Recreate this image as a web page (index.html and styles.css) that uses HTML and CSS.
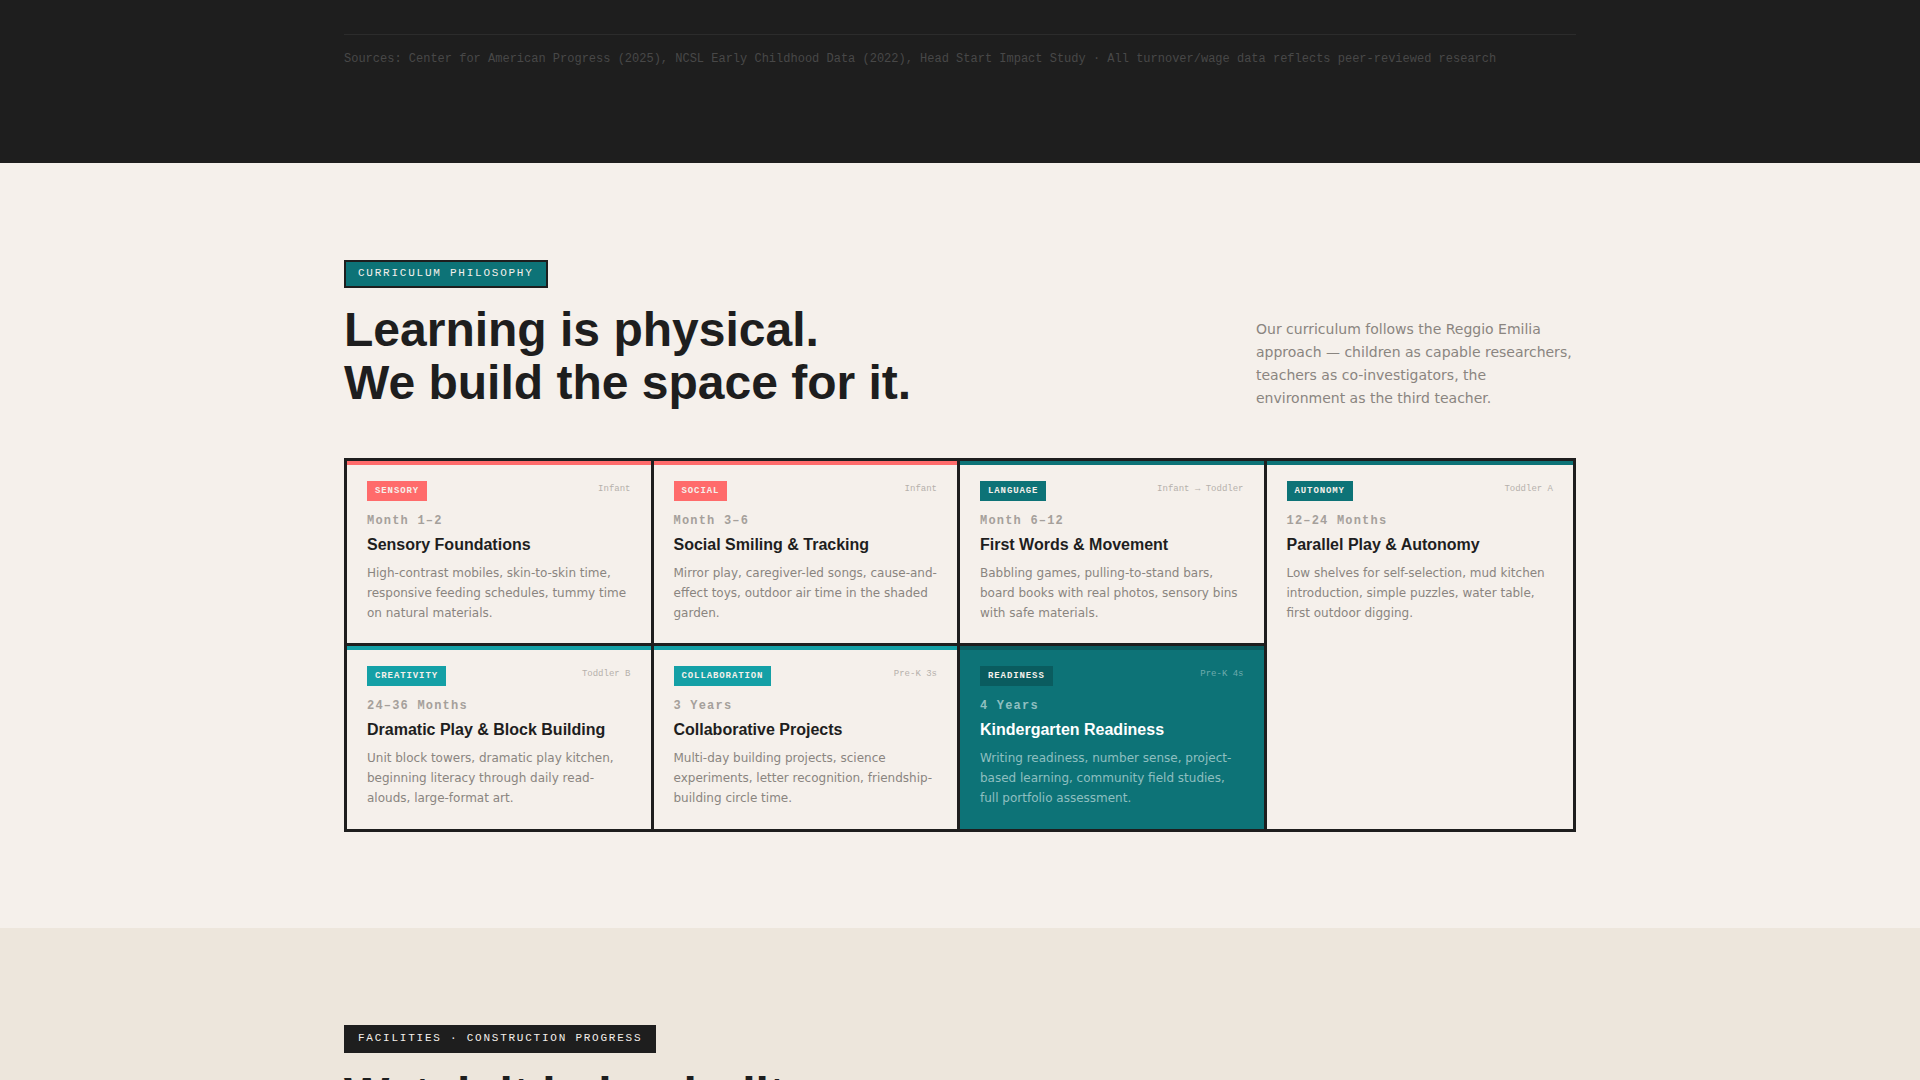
FILE: index.html
```
<!DOCTYPE html>
<html lang="en">

<head>
    <meta charset="UTF-8">
    <meta name="viewport" content="width=device-width, initial-scale=1.0">

    <title>Curriculum Philosophy</title>
    <link rel="stylesheet" href="styles.css">
</head>

<body>
    <section class="research">
        <div class="container">
            <p class="sources">Sources: Center for American Progress (2025), NCSL Early Childhood Data (2022), Head Start Impact Study · All turnover/wage data reflects peer-reviewed research</p>
        </div>
    </section>

    <section class="curriculum">
        <div class="container">
            <div class="section-head">
                <div>
                    <span class="label label-teal">CURRICULUM PHILOSOPHY</span>
                    <h2>Learning is physical.<br>We build the space for it.</h2>
                </div>
                <p class="intro">Our curriculum follows the Reggio Emilia approach — children as capable researchers, teachers as co-investigators, the environment as the third teacher.</p>
            </div>

            <div class="grid">
                <article class="cell coral">
                    <div class="cell-top">
                        <span class="tag">SENSORY</span>
                        <span class="room">Infant</span>
                    </div>
                    <div class="age">Month 1–2</div>
                    <h3>Sensory Foundations</h3>
                    <p>High-contrast mobiles, skin-to-skin time, responsive feeding schedules, tummy time on natural materials.</p>
                </article>

                <article class="cell coral">
                    <div class="cell-top">
                        <span class="tag">SOCIAL</span>
                        <span class="room">Infant</span>
                    </div>
                    <div class="age">Month 3–6</div>
                    <h3>Social Smiling &amp; Tracking</h3>
                    <p>Mirror play, caregiver-led songs, cause-and-effect toys, outdoor air time in the shaded garden.</p>
                </article>

                <article class="cell teal">
                    <div class="cell-top">
                        <span class="tag">LANGUAGE</span>
                        <span class="room">Infant → Toddler</span>
                    </div>
                    <div class="age">Month 6–12</div>
                    <h3>First Words &amp; Movement</h3>
                    <p>Babbling games, pulling-to-stand bars, board books with real photos, sensory bins with safe materials.</p>
                </article>

                <article class="cell teal tall">
                    <div class="cell-top">
                        <span class="tag">AUTONOMY</span>
                        <span class="room">Toddler A</span>
                    </div>
                    <div class="age">12–24 Months</div>
                    <h3>Parallel Play &amp; Autonomy</h3>
                    <p>Low shelves for self-selection, mud kitchen introduction, simple puzzles, water table, first outdoor digging.</p>
                </article>

                <article class="cell aqua last-row">
                    <div class="cell-top">
                        <span class="tag">CREATIVITY</span>
                        <span class="room">Toddler B</span>
                    </div>
                    <div class="age">24–36 Months</div>
                    <h3>Dramatic Play &amp; Block Building</h3>
                    <p>Unit block towers, dramatic play kitchen, beginning literacy through daily read-alouds, large-format art.</p>
                </article>

                <article class="cell aqua last-row">
                    <div class="cell-top">
                        <span class="tag">COLLABORATION</span>
                        <span class="room">Pre-K 3s</span>
                    </div>
                    <div class="age">3 Years</div>
                    <h3>Collaborative Projects</h3>
                    <p>Multi-day building projects, science experiments, letter recognition, friendship-building circle time.</p>
                </article>

                <article class="cell filled last-row">
                    <div class="cell-top">
                        <span class="tag">READINESS</span>
                        <span class="room">Pre-K 4s</span>
                    </div>
                    <div class="age">4 Years</div>
                    <h3>Kindergarten Readiness</h3>
                    <p>Writing readiness, number sense, project-based learning, community field studies, full portfolio assessment.</p>
                </article>
            </div>
        </div>
    </section>

    <section class="facilities">
        <div class="container">
            <span class="label">FACILITIES · CONSTRUCTION PROGRESS</span>
            <h2>Watch it being built.</h2>
        </div>
    </section>
</body>

</html>
```

FILE: styles.css
```
:root {
    --ink: #1e1e1e;
    --paper: #f5f0eb;
    --sand: #ede6dc;
    --teal: #0d7377;
    --teal-dark: #0a5c5f;
    --aqua: #14a0a6;
    --coral: #ff6b6b;
    --mono: "Liberation Mono", monospace;
    --head: "Liberation Sans", Arial, sans-serif;
}

* {
    box-sizing: border-box;
    margin: 0;
    padding: 0;
}

body {
    display: flex;
    flex-direction: column;
    height: 100vh;
    overflow: hidden;
    background: var(--paper);
    color: var(--ink);
    font-family: "DejaVu Sans", sans-serif;
}

section {
    flex-shrink: 0;
    padding: 96px 0;
}

.container {
    max-width: 1280px;
    margin: 0 auto;
    padding: 0 24px;
}

.research {
    background: var(--ink);
    padding-top: 34px;
}

.sources {
    border-top: 1px solid #2c2c2c;
    padding-top: 16px;
    font-family: var(--mono);
    font-size: 12px;
    line-height: 16px;
    color: #484848;
}

.facilities {
    background: var(--sand);
}

.label {
    display: inline-block;
    margin: 1px 0 15px;
    padding: 4px 12px 6px;
    border: 2px solid var(--ink);
    background: var(--ink);
    color: var(--paper);
    font-family: var(--mono);
    font-size: 11px;
    line-height: 14px;
    letter-spacing: 0.16em;
}

.label-teal {
    background: var(--teal);
}

h2 {
    padding-bottom: 1px;
    font-family: var(--head);
    font-size: 48px;
    line-height: 53px;
}

.section-head {
    display: flex;
    justify-content: space-between;
    align-items: flex-end;
    margin-bottom: 48px;
}

.intro {
    width: 320px;
    font-size: 14px;
    line-height: 23px;
    color: #8a8580;
}

/* curriculum grid */
.grid {
    display: grid;
    grid-template-columns: repeat(4, 1fr);
    border: 3px solid var(--ink);
}

/* coloured stripe sits inside the cell borders */
.cell {
    padding: 20px;
    border-right: 3px solid var(--ink);
    border-bottom: 3px solid var(--ink);
    box-shadow: inset 0 4px 0 var(--accent);
}

.cell-top {
    display: flex;
    justify-content: space-between;
    align-items: flex-start;
    margin-bottom: 12px;
}

.tag {
    padding: 4px 8px;
    background: var(--accent);
    color: var(--paper);
    font-family: var(--mono);
    font-size: 9px;
    font-weight: bold;
    line-height: 12px;
    letter-spacing: 0.1em;
}

.room {
    font-family: var(--mono);
    font-size: 9px;
    line-height: 16px;
    color: #b5b0ab;
}

.age {
    margin-bottom: 6px;
    font-family: var(--mono);
    font-size: 12px;
    font-weight: bold;
    line-height: 16px;
    letter-spacing: 0.1em;
    color: #a5a09b;
}

h3 {
    margin-bottom: 8px;
    font-family: var(--head);
    font-size: 16px;
    line-height: 20px;
}

.cell p {
    font-size: 12px;
    line-height: 20px;
    color: #8a8580;
}

.coral {
    --accent: var(--coral);
}

.teal {
    --accent: var(--teal);
}

.aqua {
    --accent: var(--aqua);
}

.tall {
    grid-row: span 2;
    border-right: none;
    border-bottom: none;
}

.last-row {
    padding-bottom: 21px;
    border-bottom: none;
}

.filled {
    --accent: var(--teal-dark);
    background: var(--teal);
}

.filled h3 {
    color: #fff;
}

.filled p,
.filled .age {
    color: #8fbfc0;
}

.filled .room {
    color: #6eabad;
}
```
